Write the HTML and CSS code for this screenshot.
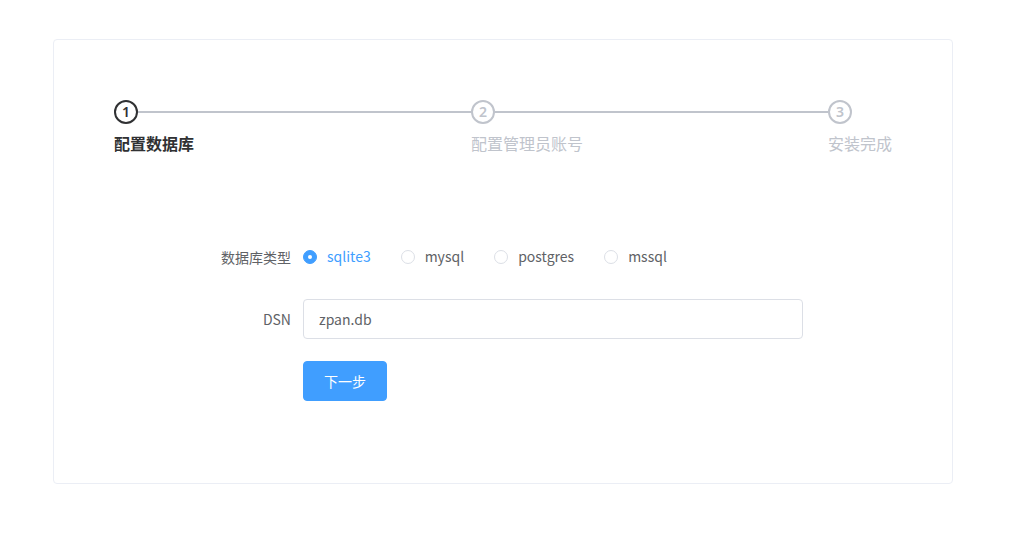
FILE: index.html
```html
<!DOCTYPE html>
<html lang="zh-CN">
<head>
<meta charset="utf-8">
<title>安装</title>
<link rel="stylesheet" href="styles.css">
</head>
<body>
<div class="card">
  <div class="steps">
    <div class="step grow">
      <div class="step-head process">
        <div class="step-line"></div>
        <div class="step-icon">1</div>
      </div>
      <div class="step-title process">配置数据库</div>
    </div>
    <div class="step grow">
      <div class="step-head wait">
        <div class="step-line"></div>
        <div class="step-icon">2</div>
      </div>
      <div class="step-title wait">配置管理员账号</div>
    </div>
    <div class="step last">
      <div class="step-head wait">
        <div class="step-icon">3</div>
      </div>
      <div class="step-title wait">安装完成</div>
    </div>
  </div>

  <form class="form">
    <div class="form-item">
      <label class="form-label">数据库类型</label>
      <div class="form-content">
        <label class="radio checked"><span class="radio-inner"></span><span class="radio-label">sqlite3</span></label>
        <label class="radio"><span class="radio-inner"></span><span class="radio-label">mysql</span></label>
        <label class="radio"><span class="radio-inner"></span><span class="radio-label">postgres</span></label>
        <label class="radio"><span class="radio-inner"></span><span class="radio-label">mssql</span></label>
      </div>
    </div>
    <div class="form-item">
      <label class="form-label">DSN</label>
      <div class="form-content">
        <input class="input" type="text" value="zpan.db">
      </div>
    </div>
    <div class="form-item">
      <div class="form-label"></div>
      <div class="form-content">
        <button class="btn" type="button">下一步</button>
      </div>
    </div>
  </form>
</div>
</body>
</html>
```

FILE: styles.css
```css
* { box-sizing: border-box; }
html, body { margin: 0; padding: 0; background: #fff; }
body {
  font-family: "Noto Sans CJK SC", "Noto Sans", sans-serif;
  font-size: 14px;
  color: #606266;
}
.card {
  width: 900px;
  margin: 39px 0 0 53px;
  border: 1px solid #ebeef5;
  border-radius: 4px;
  padding: 60px 60px 60px;
}
.steps {
  display: flex;
}
.step.grow { flex: 1 1 0; }
.step.last { flex: 0 0 auto; }
.step-head {
  position: relative;
  height: 24px;
}
.step-line {
  position: absolute;
  top: 11px;
  left: 0;
  right: 0;
  height: 2px;
  background: #c0c4cc;
}
.step-icon {
  position: relative;
  width: 24px;
  height: 24px;
  border: 2px solid;
  border-radius: 50%;
  background: #fff;
  display: flex;
  align-items: center;
  justify-content: center;
  font-family: "Noto Sans", sans-serif;
  font-size: 14px;
  font-weight: 600;
  line-height: 1;
}
.step-head.process { color: #303133; }
.step-head.process .step-icon { border-color: #303133; }
.step-head.wait { color: #c0c4cc; }
.step-head.wait .step-icon { border-color: #c0c4cc; }
.step-title {
  font-size: 16px;
  line-height: 38px;
  white-space: nowrap;
}
.step-title.process { color: #303133; font-weight: 700; }
.step-title.wait { color: #c0c4cc; }

.form {
  width: 600px;
  margin: 75px auto 0;
}
.form-item {
  display: flex;
  margin-bottom: 22px;
}
.form-label {
  flex: 0 0 100px;
  padding-right: 12px;
  text-align: right;
  line-height: 40px;
  color: #606266;
}
.form-content {
  flex: 1;
  display: flex;
  align-items: center;
  min-height: 40px;
}
.radio {
  display: inline-flex;
  align-items: center;
  margin-right: 30px;
  color: #606266;
  cursor: pointer;
}
.radio-inner {
  width: 14px;
  height: 14px;
  border: 1px solid #dcdfe6;
  border-radius: 50%;
  background: #fff;
  position: relative;
}
.radio.checked .radio-inner {
  border-color: #409eff;
  background: #409eff;
}
.radio.checked .radio-inner::after {
  content: "";
  position: absolute;
  left: 4px;
  top: 4px;
  width: 4px;
  height: 4px;
  border-radius: 50%;
  background: #fff;
}
.radio-label {
  padding-left: 10px;
  line-height: 20px;
  position: relative;
  top: -1px;
}
.radio.checked .radio-label { color: #409eff; }
.input {
  width: 100%;
  height: 40px;
  border: 1px solid #dcdfe6;
  border-radius: 4px;
  padding: 0 15px;
  font: inherit;
  color: #606266;
  outline: none;
}
.btn {
  height: 40px;
  padding: 0 20px;
  border: 1px solid #409eff;
  background: #409eff;
  color: #fff;
  border-radius: 4px;
  font: inherit;
  font-size: 14px;
  cursor: pointer;
}
```
